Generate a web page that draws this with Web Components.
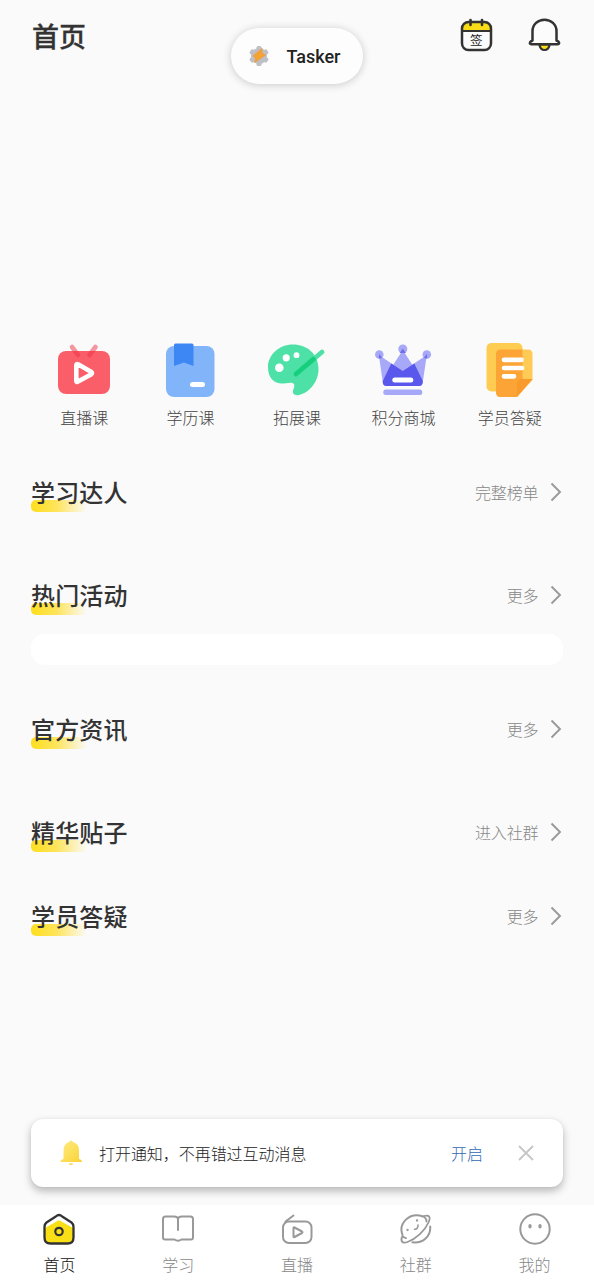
<!DOCTYPE html>
<html lang="zh-CN">
<head>
<meta charset="utf-8">
<title>首页</title>
<style>
html,body{margin:0;height:100%;background:#fafafa}
body{font-family:Roboto,"Noto Sans CJK SC","Noto Sans",sans-serif;color:#333;overflow:hidden}
</style>
</head>
<body>
<app-home></app-home>
<script>
const define = (name, html) => {
  const t = document.createElement('template');
  t.innerHTML = html;
  customElements.define(name, class extends HTMLElement {
    constructor() { super(); this.attachShadow({mode: 'open'}).append(t.content.cloneNode(true)); }
  });
};

define('app-header', `<style>
:host{display:flex;height:72px;box-sizing:border-box;padding:0 33px 0 32px;align-items:center;justify-content:space-between}
h1{margin:0;font:500 27px/40px "Noto Sans CJK SC",sans-serif;color:#333;-webkit-text-stroke:.3px #333}
.a{display:flex;gap:34px;margin-top:-3px}
svg{display:block}
</style>
<h1><slot></slot></h1>
<div class="a">
<svg width="34" height="36" viewBox="0 0 34 36"><rect x="3" y="5" width="29" height="28" rx="6.500" fill="#fcfcfc"/><path d="M3 13.500V11.500Q3 5 9.500 5H25.500Q32 5 32 11.500V13.500Z" fill="#f8dc16"/><path d="M3 14H32" stroke="#333" stroke-width="2"/><rect x="3" y="5" width="29" height="28" rx="6.500" fill="none" stroke="#333" stroke-width="2.500"/><path d="M11.500 3v5M23 3v5" stroke="#333" stroke-width="2.600" stroke-linecap="round"/><text x="17.300" y="27.500" text-anchor="middle" font-family="Noto Sans CJK SC" font-size="12.500" fill="#222">签</text></svg>
<svg width="34" height="36" viewBox="0 0 34 36"><path d="M12.500 27.500a5 5.500 0 0 0 10 0Z" fill="#f8dc16" stroke="#333" stroke-width="2.200"/><path d="M5.500 23.500V14.200C5.500 7.500 11 2.700 17.500 2.700S29.500 7.500 29.500 14.200V23.500C33 25 32.700 27.200 30.500 27.200H4.500C2.300 27.200 2 25 5.500 23.500Z" fill="#fcfcfc" stroke="#333" stroke-width="2.500" stroke-linejoin="round"/></svg>
</div>`);

define('app-toast', `<style>
:host{position:absolute;left:231px;top:28px;width:132px;height:56px;box-sizing:border-box;display:flex;align-items:center;padding-left:17px;gap:17px;border-radius:28px;background:#fdfdfd;box-shadow:0 1px 8px rgba(0,0,0,.2);font:500 18px/24px Roboto,sans-serif;color:#222}
svg{flex:none}span{position:relative;top:1px;left:-.5px}
</style>
<svg width="22" height="22" viewBox="-11 -11 22 22"><g fill="#bfc0c6"><circle r="8"/><rect x="-2.500" y="-10" width="5" height="20" rx="1.500"/><rect x="-2.500" y="-10" width="5" height="20" rx="1.500" transform="rotate(60)"/><rect x="-2.500" y="-10" width="5" height="20" rx="1.500" transform="rotate(120)"/></g><path d="M3-7L-5.500 0L-3 2L-4 6L6-1L2.500-2.500Z" fill="#f7a42c" stroke="#eda046" stroke-width="1.500" stroke-linejoin="round"/></svg>
<span><slot></slot></span>`);

define('menu-item', `<style>
:host{display:flex;flex-direction:column;align-items:center;flex:1 0 0;min-width:0}
::slotted(svg){display:block;width:64px;height:62px}
span{font:300 16px/24px "Noto Sans CJK SC",sans-serif;color:#444;margin-top:5px}
</style><slot name="icon"></slot><span><slot></slot></span>`);

define('app-menu', `<style>
:host{display:flex;padding:0 31px;margin-top:266px}
</style>
<menu-item><svg slot="icon" viewBox="52 338 64 62"><rect x="58" y="351" width="52" height="43" rx="8" fill="#fa5f69"/><path d="M72 347l6 8M95.500 347l-6 8" stroke="#ee3245" stroke-opacity=".5" stroke-width="4.600" stroke-linecap="round"/><path d="M76.300 365.300V380.700Q76.300 382.600 78 381.600L91 374.500Q93 373 91 371.700L78 364.300Q76.300 363.500 76.300 365.300Z" fill="none" stroke="#fff" stroke-width="4.600" stroke-linejoin="round"/></svg>直播课</menu-item>
<menu-item><svg slot="icon" viewBox="159 338 64 62"><rect x="166" y="346" width="48.500" height="51" rx="8" fill="#82b4fa"/><path d="M174 345Q174 343.500 175.500 343.500H192Q193.500 343.500 193.500 345V366L184 362.500L174 366Z" fill="#3d87f5"/><rect x="190" y="382" width="15" height="5" rx="2.500" fill="#fff"/></svg>学历课</menu-item>
<menu-item><svg slot="icon" viewBox="265 338 64 62"><path d="M293 344.500C279 344.500 268 355 268 367C268 379 275 384 283 383.500L289 383C294 382 295.500 385 293.500 389C291.500 393 294.500 396 299 395C309 393 318.500 382 318.500 369C318.500 354 307 344.500 293 344.500Z" fill="#4de0a7"/><circle cx="279.300" cy="367.800" r="4.300" fill="#fff"/><circle cx="286.200" cy="357.800" r="3.600" fill="#fff"/><circle cx="296.500" cy="355.200" r="2.900" fill="#fff"/><path d="M296 374L322 352" stroke="#4de0a7" stroke-width="4.800" stroke-linecap="round"/><path d="M296 374L313.500 359.200" stroke="#15cf7d" stroke-width="4.800" stroke-linecap="round"/></svg>拓展课</menu-item>
<menu-item><svg slot="icon" viewBox="371.200 338 64 62"><path d="M379 355L403 371L427 355L423 382Q422.500 386 419 386H387Q383.500 386 383 382Z" fill="#a7a9f8"/><path d="M403 350L383 381Q382.500 386 387 386H419Q423.500 386 423 381Z" fill="#a7a9f8"/><path d="M391.500 363.500L403 371L414.500 363.500L423 381Q423 386 419 386H387Q382.500 386 383 381Z" fill="#5957ec"/><g fill="#a7a9f8"><circle cx="379.500" cy="354.500" r="4.300"/><circle cx="403" cy="349" r="4.500"/><circle cx="427" cy="354.500" r="4.300"/><rect x="383.500" y="389.500" width="39" height="5.500" rx="2.500"/></g><path d="M403 348.500L406 353H400ZM379.500 354l3 4-3.500.5zM427 354l-3 4 3.500.5z" fill="#716ee7"/><rect x="392.500" y="377.500" width="21" height="5" rx="2.500" fill="#fff"/></svg>积分商城</menu-item>
<menu-item><svg slot="icon" viewBox="478 338 64 62"><rect x="486.500" y="343" width="36" height="48.500" rx="5" fill="#ffcc52"/><path d="M500.500 349.500H528Q532.500 349.500 532.500 354V380L517 397H500.500Q496 397 496 392V354Q496 349.500 500.500 349.500Z" fill="#ffcb56"/><path d="M500.500 349.500H522.500V379L517 397H500.500Q496 397 496 392V354Q496 349.500 500.500 349.500Z" fill="#fca536"/><path d="M532.500 379L517 397V384Q517 379 522 379Z" fill="#f99a2d"/><path d="M504 359.800h17.500M504 368h18M504 376.300h10" stroke="#fff" stroke-width="4.700" stroke-linecap="round"/></svg>学员答疑</menu-item>`);

define('section-head', `<style>
:host{display:flex;height:36px;padding:0 31px;align-items:center;justify-content:space-between}
h2{margin:-3px 0 0;font:500 24px/36px "Noto Sans CJK SC",sans-serif;letter-spacing:.15px;color:#333;position:relative;isolation:isolate}
h2::before{content:"";position:absolute;z-index:-1;left:0;bottom:-2px;width:56px;height:12px;border-radius:5px;background:linear-gradient(90deg,#fedf1e,#fee45a 45%,#fafafa)}
.m{display:flex;align-items:center;gap:11px;font:300 16px/24px "Noto Sans CJK SC",sans-serif;color:#888}
.t{margin:-3px -.5px 0 0;letter-spacing:-.1px}
svg{display:block;margin-top:-2px}
</style><h2><slot></slot></h2><div class="m"><div class="t"><slot name="more"></slot></div><svg width="14" height="20" viewBox="0 0 14 20"><path d="M2.500 1.500L11 10L2.500 18.500" fill="none" stroke="#999" stroke-width="1.900"/></svg></div>`);

define('notice-bar', `<style>
:host{position:absolute;left:31px;right:31px;top:1119px;height:68px;box-sizing:border-box;display:flex;align-items:center;padding:0 28px;background:#fff;border-radius:12px;box-shadow:0 4px 8px rgba(0,0,0,.27),0 0 2px rgba(0,0,0,.07);font:300 16px/24px "Noto Sans CJK SC",sans-serif;color:#222}
p{margin:0 auto 0 16px;letter-spacing:-.05px}.o{color:#3068b5;margin-right:34px}svg{display:block;flex:none}
</style><svg width="24" height="28" viewBox="0 0 24 28"><defs><linearGradient id="b" x1="0" y1="0" x2="1" y2="1"><stop stop-color="#ffec85"/><stop offset="1" stop-color="#fad233"/></linearGradient></defs><path d="M10 3Q12 0 14 3Q20 5 20 11V20Q23 20.500 23 23H1.500Q1.500 20.500 4.500 20V11Q4.500 5 10 3Z" fill="url(#b)"/><path d="M9.500 24.500h5q-2.500 3-5 0" fill="#f8d13a"/></svg><p><slot></slot></p><span class="o">开启</span><svg width="18" height="18" viewBox="0 0 18 18"><path d="M2 2L16 16M16 2L2 16" stroke="#c6c6c6" stroke-width="1.800"/></svg>`);

define('nav-item', `<style>
:host{flex:1 0 0;min-width:0;display:flex;flex-direction:column;align-items:center;color:#888;padding-top:6px}
::slotted(svg){display:block;width:36px;height:36px}
span{font:300 16px/24px "Noto Sans CJK SC",sans-serif;margin-top:5px}
</style><slot name="icon"></slot><span><slot></slot></span>`);

define('app-nav', `<style>
:host{position:absolute;left:0;right:0;bottom:0;height:75px;display:flex;background:#fff}
svg{fill:none;stroke:#999;stroke-width:2;stroke-linecap:round;stroke-linejoin:round}
nav-item.on{color:#111}
</style>
<nav-item class="on"><svg slot="icon" viewBox="0 0 36 36"><path d="M14.800 5.500Q18 2.600 21.200 5.500L30.500 11.500Q32.500 13 32.500 16V26.500Q32.500 32.500 26.500 32.500H9.500Q3.500 32.500 3.500 26.500V16Q3.500 13 5.500 11.500Z" stroke="none" fill="#fff"/><path d="M15.500 10.500Q18 8.500 20.500 10.500L32 17V27Q32 32 27 32H9Q4 32 4 27V17Z" fill="#f9df16" stroke="none"/><path d="M14.800 5.500Q18 2.600 21.200 5.500L30.500 11.500Q32.500 13 32.500 16V26.500Q32.500 32.500 26.500 32.500H9.500Q3.500 32.500 3.500 26.500V16Q3.500 13 5.500 11.500Z" stroke="#333" stroke-width="2.300"/><circle cx="18" cy="20.500" r="3.700" stroke="#333" stroke-width="2.200"/></svg>首页</nav-item>
<nav-item><svg slot="icon" viewBox="0 0 36 36"><path d="M18 19V8.500Q18 5.500 14 5.500H5.500Q3 5.500 3 8V26.500Q3 28.500 5 28.500H14.500Q18 31 21.500 28.500H31Q33 28.500 33 26.500V8Q33 5.500 30.500 5.500H22Q18 5.500 18 8.500"/></svg>学习</nav-item>
<nav-item><svg slot="icon" viewBox="0 0 36 36"><rect x="4" y="10.500" width="28.500" height="21.500" rx="6"/><path d="M6.500 10.500L14.500 4.500M14.500 17V25.500Q14.500 26.500 15.500 26L23 22Q24 21.200 23 20.500L15.500 16.500Q14.500 16 14.500 17Z"/></svg>直播</nav-item>
<nav-item><svg slot="icon" viewBox="0 0 36 36"><path d="M4.500 24C0 12 12 .5 25 5.500M32.200 15.500C33 25 25 32.500 14.500 31.300"/><path d="M25 5.500C31.500 3.300 33 6 30.500 11.500C27 19.500 18 28 9.500 31C4 33 2 30 4.500 25Q5.500 26.500 8 27.200M26.500 6.200Q28.500 7.500 28.500 10.500" stroke-width="1.800"/><path d="M16.500 18.200Q20 18.500 20 14" stroke-width="1.600"/><path d="M9.500 19h.1M19 9.500h.1" stroke-width="2.300"/></svg>社群</nav-item>
<nav-item><svg slot="icon" viewBox="0 0 36 36"><circle cx="18" cy="18" r="14.700"/><path d="M13 14.500v1.300M23 14.500v1.300" stroke-width="3.200"/></svg>我的</nav-item>`);

define('app-home', `<style>
:host{display:block;position:relative;width:594px;height:1280px;background:#fafafa;overflow:hidden}
.card{margin:20px 31px 0;height:31px;border-radius:14px;background:#fff}
</style>
<app-header>首页</app-header>
<app-menu></app-menu>
<section-head style="margin-top:46px">学习达人<span slot="more">完整榜单</span></section-head>
<section-head style="margin-top:67px">热门活动<span slot="more">更多</span></section-head>
<div class="card"></div>
<section-head style="margin-top:47px">官方资讯<span slot="more">更多</span></section-head>
<section-head style="margin-top:67px">精华贴子<span slot="more">进入社群</span></section-head>
<section-head style="margin-top:48px">学员答疑<span slot="more">更多</span></section-head>
<notice-bar>打开通知，不再错过互动消息</notice-bar>
<app-nav></app-nav>
<app-toast>Tasker</app-toast>`);
</script>
</body>
</html>
